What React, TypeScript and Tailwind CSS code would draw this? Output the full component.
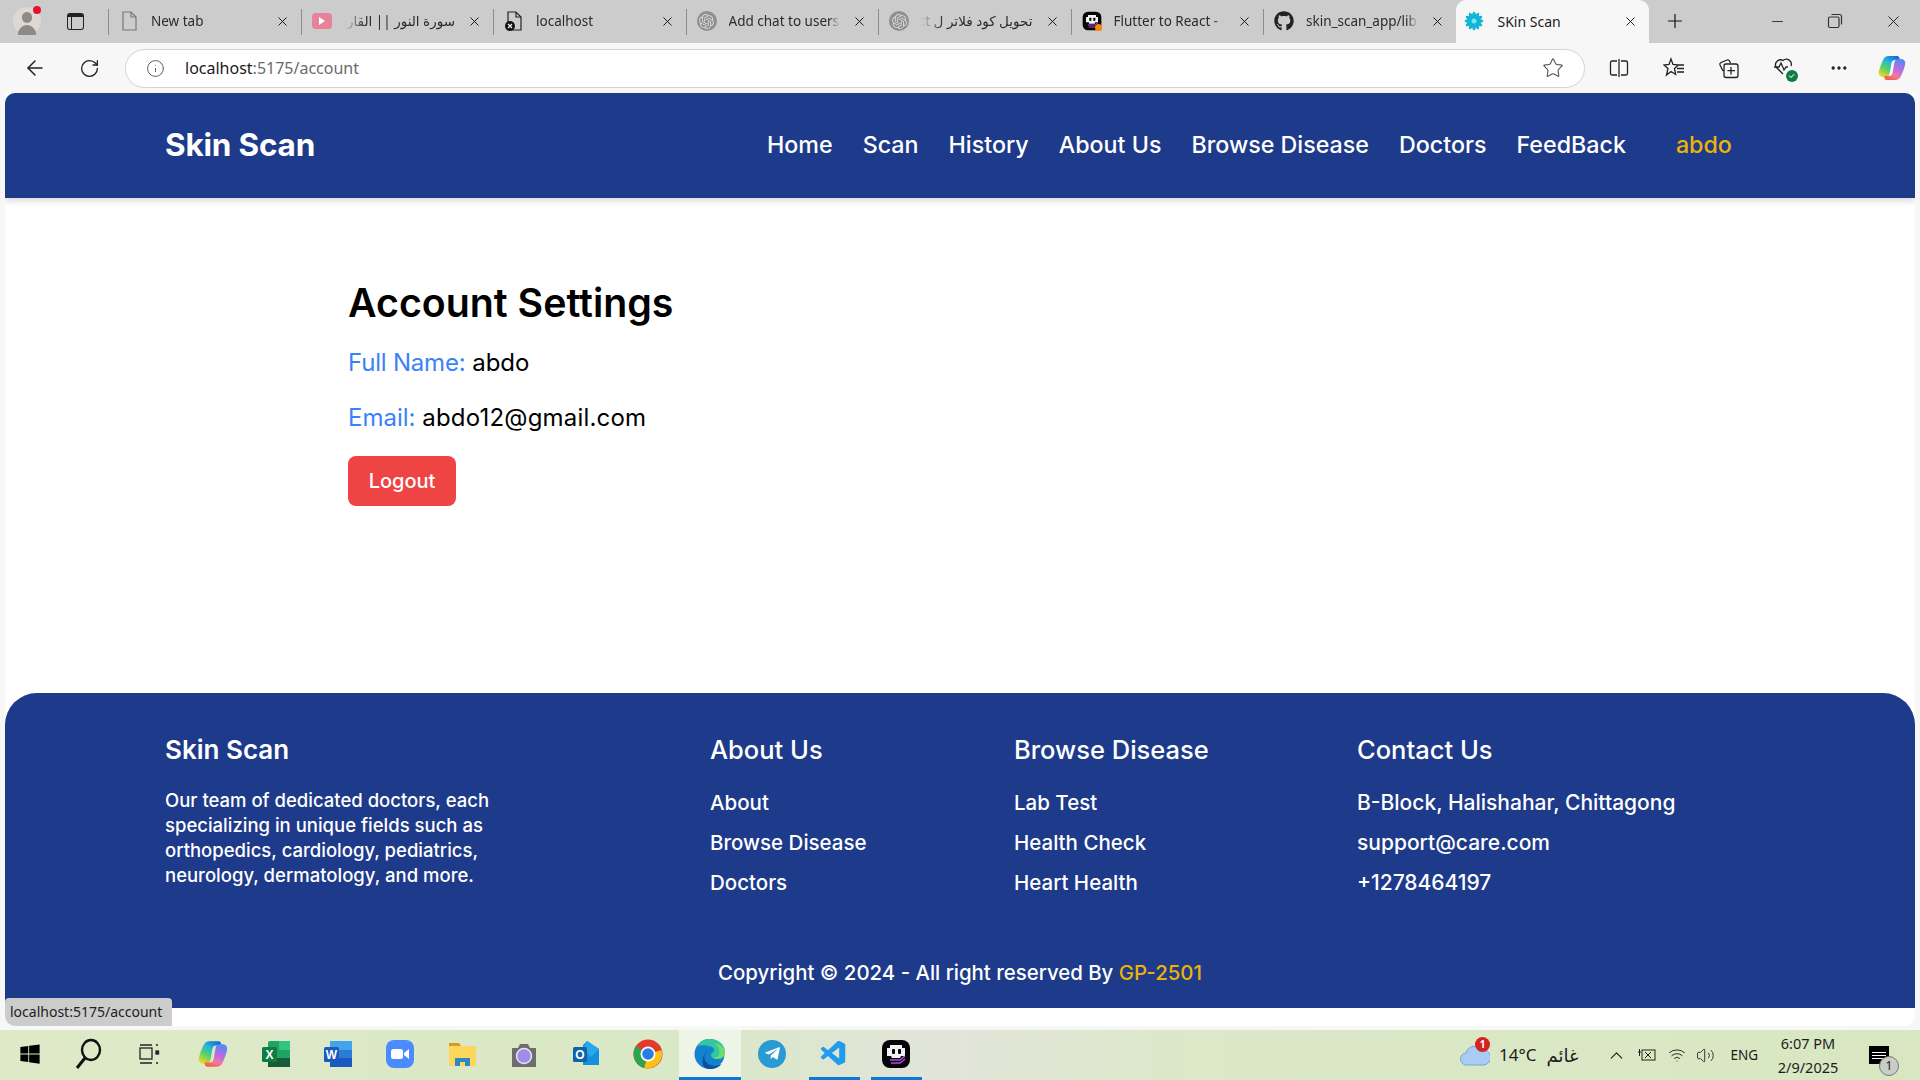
import React from 'react';
import { ArrowLeft, RotateCw, Info, Star, X, Plus, Minus, Ellipsis, ChevronUp, Wifi, Volume2 } from 'lucide-react';
import { FaGithub, FaTelegramPlane, FaWindows } from 'react-icons/fa';
import { VscVscode } from 'react-icons/vsc';
import { SiOpenai } from 'react-icons/si';

const Bot = ({ size = 20, dot = false }: { size?: number; dot?: boolean }) => (
  <svg width={size} height={size} viewBox="0 0 30 30">
    <rect x="1" y="1" width="28" height="28" rx="8" fill="#050507" />
    <path d="M9 6h12v3h3v8h-4l-1 2h-8l-1-2H6V9h3z" fill="#f2f2f2" />
    <rect x="11" y="10" width="3" height="5" rx="1" fill="#050507" />
    <rect x="17" y="10" width="3" height="5" rx="1" fill="#050507" />
    <path d="M9 21h10l5-4M10 24h9l5-4" stroke="#b44ae0" strokeWidth="1.500" fill="none" />
    {dot && <circle cx="25" cy="25" r="5.500" fill="#f48a0c" />}
  </svg>
);

const Flower = () => (
  <svg width="20" height="20" viewBox="0 0 20 20">
    {[0, 30, 60, 90, 120, 150].map((a) => (
      <ellipse key={a} cx="10" cy="10" rx="2.600" ry="9.500" fill="#12b5d6" transform={`rotate(${a} 10 10)`} />
    ))}
    <circle cx="10" cy="10" r="2.500" fill="#7ee3f2" />
  </svg>
);

const DocIcon = ({ broken = false }: { broken?: boolean }) => (
  <svg width="20" height="22" viewBox="0 0 20 22" fill="none" stroke={broken ? '#222' : '#777'} strokeWidth="1.200">
    <path d="M4 2h8l5 5v13H4z" />
    <path d="M12 2v5h5" />
    {broken && <circle cx="6" cy="16" r="5" fill="#111" stroke="none" />}
    {broken && <path d="M4 14l4 4M8 14l-4 4" stroke="#fff" />}
  </svg>
);

const YouTube = () => (
  <div className="w-5 h-4 rounded bg-[#e8829b] flex items-center justify-center">
    <div className="w-0 h-0 border-y-[4px] border-y-transparent border-l-[6px] border-l-white" />
  </div>
);

const Gpt = () => (
  <div className="w-5 h-5 rounded-full bg-[#8f8f8f] flex items-center justify-center text-[#d8d8d8]">
    <SiOpenai size={15} />
  </div>
);

const tabs = [
  { title: 'New tab', icon: <DocIcon /> },
  { title: 'سورة النور || القارئ', icon: <YouTube />, rtl: true },
  { title: 'localhost', icon: <DocIcon broken /> },
  { title: 'Add chat to users', icon: <Gpt /> },
  { title: 'تحويل كود فلاتر ل React', icon: <Gpt />, rtl: true },
  { title: 'Flutter to React -', icon: <Bot dot /> },
  { title: 'skin_scan_app/lib/', icon: <FaGithub size={20} color="#222" /> },
];

const Copilot = ({ size = 24 }: { size?: number }) => (
  <svg width={size} height={size} viewBox="0 0 28 28">
    <defs>
      <linearGradient id="cpA" x1="0.800" y1="0" x2="0.200" y2="1">
        <stop offset="0" stopColor="#1667d9" />
        <stop offset="0.350" stopColor="#25b8d8" />
        <stop offset="0.650" stopColor="#58cf6a" />
        <stop offset="1" stopColor="#f4d81e" />
      </linearGradient>
      <linearGradient id="cpB" x1="0.700" y1="0" x2="0.300" y2="1">
        <stop offset="0" stopColor="#4f8df0" />
        <stop offset="0.400" stopColor="#b46ae6" />
        <stop offset="0.750" stopColor="#f078a8" />
        <stop offset="1" stopColor="#f4623a" />
      </linearGradient>
    </defs>
    <path d="M11 2h8c1 0 2 .6 2.300 1.600L22 6h-5c-2 0-3 1-3.500 3L11.500 20c-.6 2-2 3-4 3H5c-3 0-5-2.500-4-6 1-4 2.500-8 4-11 1-2.500 3-4 6-4z" fill="url(#cpA)" />
    <path d="M17 26H9c-1 0-2-.6-2.300-1.600L6 22h5c2 0 3-1 3.500-3L16.500 8c.6-2 2-3 4-3H23c3 0 5 2.500 4 6-1 4-2.500 8-4 11-1 2.500-3 4-6 4z" fill="url(#cpB)" />
  </svg>
);

const Excel = () => (
  <svg width="30" height="30" viewBox="0 0 30 30">
    <rect x="7" y="2" width="22" height="26" rx="2" fill="#21a366" />
    <rect x="18" y="2" width="11" height="9" fill="#33c481" />
    <rect x="7" y="19" width="22" height="9" fill="#185c37" />
    <rect x="1" y="8" width="15" height="15" rx="1.500" fill="#107c41" />
    <text x="8.500" y="20" fontSize="12" fontWeight="700" fill="#fff" textAnchor="middle" fontFamily="Liberation Sans">X</text>
  </svg>
);

const Word = () => (
  <svg width="30" height="30" viewBox="0 0 30 30">
    <rect x="7" y="2" width="22" height="26" rx="2" fill="#2b7cd3" />
    <rect x="7" y="2" width="22" height="9" fill="#41a5ee" />
    <rect x="7" y="19" width="22" height="9" fill="#185abd" />
    <rect x="1" y="8" width="15" height="15" rx="1.500" fill="#185abd" />
    <text x="8.500" y="20" fontSize="12" fontWeight="700" fill="#fff" textAnchor="middle" fontFamily="Liberation Sans">W</text>
  </svg>
);

const Zoom = () => (
  <svg width="30" height="30" viewBox="0 0 30 30">
    <rect x="1" y="1" width="28" height="28" rx="8" fill="#4a8cff" />
    <rect x="6" y="10" width="12" height="10" rx="2.500" fill="#fff" />
    <path d="M19 14l5-4v10l-5-4z" fill="#fff" />
  </svg>
);

const Files = () => (
  <svg width="30" height="30" viewBox="0 0 30 30">
    <path d="M2 4h10l2 3v3H2z" fill="#d69a1e" />
    <rect x="2" y="7" width="27" height="20" rx="1" fill="#fbd75c" />
    <path d="M8 27v-8h15v8h-5v-4h-5v4z" fill="#2f86c9" />
  </svg>
);

const Camera = () => (
  <svg width="30" height="30" viewBox="0 0 30 30">
    <path d="M3 9h6l2-4h8l2 4h6v19H3z" fill="#6d6d6d" />
    <circle cx="15" cy="17" r="7.500" fill="#a58be8" stroke="#dfe7f5" strokeWidth="1.500" />
  </svg>
);

const Outlook = () => (
  <svg width="30" height="30" viewBox="0 0 30 30">
    <path d="M16 2l12 8v16H12V6z" fill="#1490df" />
    <path d="M16 2l12 8-8 8-8-8z" fill="#28a8ea" />
    <rect x="2" y="8" width="14" height="15" rx="1.500" fill="#0f63a8" />
    <text x="9" y="20" fontSize="12" fontWeight="700" fill="#fff" textAnchor="middle" fontFamily="Liberation Sans">O</text>
  </svg>
);

const Chrome = () => (
  <svg width="30" height="30" viewBox="0 0 30 30">
    <circle cx="15" cy="15" r="14.500" fill="#e33b2e" />
    <path d="M15 15L28.500 11A14.500 14.500 0 0 1 11 29z" fill="#fbc116" />
    <path d="M15 15L11 29A14.500 14.500 0 0 1 3 7z" fill="#2ea44f" />
    <circle cx="15" cy="15" r="7.500" fill="#fff" />
    <circle cx="15" cy="15" r="5.800" fill="#2a7de1" />
  </svg>
);

const Edge = () => (
  <svg width="32" height="32" viewBox="0 0 32 32">
    <circle cx="15.500" cy="16" r="15" fill="#1483cf" />
    <path d="M3 8C6 3 11 1 16 1c9 0 15 6 15 13 0 4-3 7-7 7-3 0-7-1-7-4 0-2 2-2 3-4 .5-1 0-3-2-4C13 7 7 7 3 8z" fill="#33c6a0" />
    <path d="M20 5c6 1 11 5 11 9 0 4-3 7-7 7-2 0-4-.4-5.500-1.500 5 .5 7-2 7-5 0-4-2-7-5.500-9.500z" fill="#6edc6a" />
    <path d="M14 13c-4 2-5 8-1 12 3 3 9 4 15 1-3 3-7 5-12 5-3 0-5-1-6-2-3-5-1-14 4-16z" fill="#0d4f9e" />
  </svg>
);

const CopyIcon = () => (
  <svg width="18" height="18" viewBox="0 0 18 18" fill="none" stroke="#333" strokeWidth="1.200">
    <rect x="2.500" y="5" width="10.500" height="10.500" rx="1.500" />
    <path d="M5.500 2.500h8a2 2 0 0 1 2 2v8" />
  </svg>
);

const TaskView = () => (
  <svg width="24" height="24" viewBox="0 0 24 24" fill="none" stroke="#222" strokeWidth="1.300">
    <rect x="3" y="6" width="12" height="11" />
    <path d="M3 3h12M3 21h12M19 3h2M19 21h2" />
    <rect x="19" y="9" width="2.500" height="3" fill="#222" />
  </svg>
);

const SearchGlass = () => (
  <svg width="30" height="32" viewBox="0 0 30 32" fill="none" stroke="#111" strokeWidth="2.400">
    <ellipse cx="17" cy="12" rx="9" ry="10" />
    <path d="M11 20L3 30" strokeWidth="3" />
  </svg>
);

const taskIcons: { node: React.ReactNode; w: number; active?: boolean; run?: boolean }[] = [
  { node: <FaWindows size={22} color="#000" />, w: 60 },
  { node: <SearchGlass />, w: 58 },
  { node: <TaskView />, w: 62 },
  { node: <Copilot size={30} />, w: 65 },
  { node: <Excel />, w: 62 },
  { node: <Word />, w: 62 },
  { node: <Zoom />, w: 62 },
  { node: <Files />, w: 62 },
  { node: <Camera />, w: 62 },
  { node: <Outlook />, w: 62 },
  { node: <Chrome />, w: 62 },
  { node: <Edge />, w: 62, active: true },
  { node: <div className="w-[28px] h-[28px] rounded-full bg-[#2a9ad4] flex items-center justify-center"><FaTelegramPlane size={17} color="#fff" /></div>, w: 62 },
  { node: <VscVscode size={30} color="#1f9cf0" />, w: 62, run: true },
  { node: <Bot size={30} />, w: 62, run: true },
];

const navLinks = ['Home', 'Scan', 'History', 'About Us', 'Browse Disease', 'Doctors', 'FeedBack'];

const FooterCol = ({ title, items, className, itemSize }: { title: string; items: string[]; className: string; itemSize: string }) => (
  <div className={className}>
    <h3 className="text-[25.500px] leading-[36px] font-medium">{title}</h3>
    <ul className={`mt-[20px] flex flex-col gap-[10px] leading-[30px] font-medium ${itemSize}`}>
      {items.map((i) => <li key={i}>{i}</li>)}
    </ul>
  </div>
);

export default function App() {
  return (
    <div className="w-[1920px] h-[1080px] overflow-hidden flex flex-col bg-[#f7f7f7] font-['Inter',_sans-serif]">
      {/* tab strip */}
      <div className="h-[43px] bg-[#cccccc] flex items-stretch font-['Noto_Sans','DejaVu_Sans',sans-serif] text-[13.500px] text-[#222] pb-[1px]">
        <div className="w-[108px] flex items-center pl-[13px] gap-[26px]">
          <div className="relative w-[28px] h-[28px] rounded-full bg-[#dcd9d5] flex items-end justify-center overflow-visible">
            <div className="absolute top-[5px] left-[9px] w-[10px] h-[11px] rounded-full bg-[#8f8a86]" />
            <div className="w-[18px] h-[10px] rounded-t-full bg-[#8f8a86]" />
            <div className="absolute -top-[1px] right-0 w-2 h-2 rounded-full bg-[#e8112d]" />
          </div>
          <div className="w-[17px] h-[17px] rounded-[3px] border-[1.500px] border-[#222] border-t-[4px] flex">
            <div className="w-[4px] border-r border-[#222]" />
          </div>
        </div>
        {tabs.map((t) => (
          <div key={t.title} className="w-[192.500px] flex items-center pl-[11px] pr-[11px] gap-[12px] relative before:content-[''] before:absolute before:left-0 before:top-[9px] before:bottom-[7px] before:w-px before:bg-[#8c8c8c]">
            <div className="w-[20px] h-5 flex items-center justify-center shrink-0">{t.icon}</div>
            {t.rtl ? (
              <div className="flex-1 overflow-hidden whitespace-nowrap mask-l-from-80% text-[#2b2b2b]" dir="rtl">{t.title}</div>
            ) : (
              <div className="flex-1 overflow-hidden whitespace-nowrap mask-r-from-90% text-[#2b2b2b]">{t.title}</div>
            )}
            <X size={15} strokeWidth={1.500} className="shrink-0 text-[#111]" />
          </div>
        ))}
        <div className="w-[193px] -mb-[1px] bg-[#f7f7f7] rounded-t-[10px] flex items-center pl-[8px] pr-[11px] pb-[1px] gap-[14px]">
          <Flower />
          <div className="flex-1 text-[14px] text-[#222]">SKin Scan</div>
          <X size={15} strokeWidth={1.500} className="text-[#111]" />
        </div>
        <div className="flex items-center pl-[15px]">
          <Plus size={22} strokeWidth={1.300} className="text-[#111]" />
        </div>
        <div className="ml-auto flex items-center pr-[17px] gap-[40px]">
          <Minus size={17} strokeWidth={1.200} className="text-[#222]" />
          <CopyIcon />
          <X size={19} strokeWidth={1.200} className="text-[#222]" />
        </div>
      </div>

      {/* toolbar */}
      <div className="h-[50px] flex items-center pl-[23px]">
        <ArrowLeft size={24} strokeWidth={1.500} className="text-[#222]" />
        <RotateCw size={21} strokeWidth={1.500} className="ml-[32px] text-[#222]" />
        <div className="ml-[25px] w-[1460px] h-[39px] rounded-full bg-white border-[1.500px] border-[#d4d4d4] flex items-center pl-[20px] pr-[20px] font-['Noto_Sans',sans-serif] text-[16px]">
          <Info size={19} strokeWidth={1.200} className="text-[#555]" />
          <span className="ml-[20px] text-[#1b1b1b]">localhost</span>
          <span className="text-[#6b6b6b]">:5175/account</span>
          <Star size={22} strokeWidth={1.200} className="ml-auto text-[#555]" />
        </div>
        <div className="ml-[6px] flex items-center">
          <div className="w-[55px] flex justify-center">
            <svg width="20" height="20" viewBox="0 0 20 20" fill="none" stroke="#222" strokeWidth="1.300"><path d="M8 3H3a1.500 1.500 0 0 0-1.500 1.500v11A1.500 1.500 0 0 0 3 17h5M12 3h5a1.500 1.500 0 0 1 1.500 1.500v11A1.500 1.500 0 0 1 17 17h-5M10 1v18" /></svg>
          </div>
          <div className="w-[55px] flex justify-center">
            <svg width="22" height="22" viewBox="0 0 22 22" fill="none" stroke="#222" strokeWidth="1.300"><path d="M8 2l2 5.500 5.500.5-4 3.500 1.200 6L8 14.500 3.500 18l1.500-6.500-4-3.500 5-.5zM14 8h7M14 11.500h7M14 15h7" /></svg>
          </div>
          <div className="w-[55px] flex justify-center">
            <svg width="22" height="22" viewBox="0 0 22 22" fill="none" stroke="#222" strokeWidth="1.300"><path d="M5 14L2 8a2 2 0 0 1 1-2.500L9 3a2 2 0 0 1 2.500 1l1 2M8 20.500h10a2 2 0 0 0 2-2V9a2 2 0 0 0-2-2H8a2 2 0 0 0-2 2v9.500a2 2 0 0 0 2 2zM13 10v7.500M9.500 13.700h7.500" /></svg>
          </div>
          <div className="w-[55px] flex justify-center">
            <div className="relative w-[22px] h-[22px]">
              <svg width="22" height="20" viewBox="0 0 22 20" fill="none" stroke="#222" strokeWidth="1.300"><path d="M10 17L3 10a5 5 0 0 1 7-6.500A5 5 0 0 1 18 9M1 10h5l2-4 3 7 2-3h2" /></svg>
              <div className="absolute -right-[3px] -bottom-[3px] w-[12px] h-[12px] rounded-full bg-[#107c41] text-white text-[8px] leading-[12px] text-center">✓</div>
            </div>
          </div>
          <div className="w-[55px] flex justify-center">
            <Ellipsis size={20} className="text-[#222]" />
          </div>
          <div className="w-[52px] flex justify-center">
            <Copilot size={28} />
          </div>
        </div>
      </div>

      {/* page */}
      <div className="mx-[5px] w-[1910px] h-[933px] bg-white rounded-b-[10px] flex flex-col relative overflow-hidden text-black">
        <nav className="h-[105px] shrink-0 bg-[#1e3a8a] rounded-t-[10px] shadow-[0_3px_6px_rgba(0,0,0,0.15)] flex items-center text-white pl-[160px] pb-[1px]">
          <div className="w-[602px] text-[31.500px] font-bold tracking-[-0.2px]">Skin Scan</div>
          <div className="flex gap-[30px] text-[23.250px] font-medium">
            {navLinks.map((l) => <span key={l}>{l}</span>)}
            <span className="ml-[20px] text-[#eab308]">abdo</span>
          </div>
        </nav>

        <main className="h-[495px] shrink-0 pl-[343px] pt-[82px]">
          <h1 className="text-[39.300px] leading-[46px] font-semibold">Account Settings</h1>
          <p className="mt-[19px] text-[24px] leading-[36px]"><span className="text-[#3b82f6] tracking-[-0.2px]">Full Name:</span> abdo</p>
          <p className="mt-[19px] text-[24px] leading-[36px]"><span className="text-[#3b82f6]">Email:</span> <span className="tracking-[0.2px]">abdo12@gmail.com</span></p>
          <button className="mt-[20px] w-[108px] h-[50px] rounded-lg bg-[#ef4444] text-white text-[20px] font-medium">Logout</button>
        </main>

        <footer className="h-[315px] shrink-0 bg-[#1e3a8a] rounded-t-[32px] text-white pl-[160px] pt-[39px] flex flex-col">
          <div className="flex">
            <div className="w-[545px]">
              <h3 className="text-[26px] leading-[36px] font-semibold">Skin Scan</h3>
              <p className="mt-[20px] w-[345px] text-[18.500px] leading-[25px] font-medium">Our team of dedicated doctors, each specializing in unique fields such as orthopedics, cardiology, pediatrics, neurology, dermatology, and more.</p>
            </div>
            <FooterCol className="w-[304px]" itemSize="text-[20.500px]" title="About Us" items={['About', 'Browse Disease', 'Doctors']} />
            <FooterCol className="w-[343px]" itemSize="text-[20.500px]" title="Browse Disease" items={['Lab Test', 'Health Check', 'Heart Health']} />
            <FooterCol className="w-[400px]" itemSize="text-[21px]" title="Contact Us" items={['B-Block, Halishahar, Chittagong', 'support@care.com', '+1278464197']} />
          </div>
          <div className="mt-[60px] -ml-[160px] text-center text-[20.400px] leading-[30px] font-medium">Copyright © 2024 - All right reserved By <span className="text-[#eab308]">GP-2501</span></div>
        </footer>

        <div className="absolute left-0 bottom-0 w-[167px] h-[28px] bg-[#cccccc] rounded-t-[4px] rounded-bl-[8px] pl-[5px] pb-[1px] flex items-center font-['Noto_Sans',sans-serif] text-[14px] text-[#222]">localhost:5175/account</div>
      </div>

      {/* taskbar */}
      <div className="mt-auto h-[50px] bg-[linear-gradient(90deg,#dfe9c8,#d9e8c6_36%,#e2e4da_49%,#dce8c8_62%,#d8e7c2)] flex items-stretch font-['Noto_Sans','DejaVu_Sans',sans-serif] text-[#1c1c1c]">
        {taskIcons.map((t, i) => (
          <div key={i} style={{ width: t.w }} className={`flex justify-center ${t.active ? 'bg-[#eef5e6]' : ''}`}>
            <div className={`flex items-center justify-center border-b-[3px] ${t.active ? 'w-full border-[#0f78d4]' : t.run ? 'w-[51px] border-[#0f78d4]' : 'w-full border-transparent'}`}>
              {t.node}
            </div>
          </div>
        ))}
        <div className="ml-auto flex items-center pr-[31px]">
          <div className="relative w-[30px] h-[22px] mr-[9px]">
            <svg width="30" height="22" viewBox="0 0 30 22"><path d="M7 21a6 6 0 0 1-1-12 9 9 0 0 1 16-3 7.500 7.500 0 0 1 2 15z" fill="#a9cdf2" stroke="#6fa6e0" /></svg>
            <div className="absolute -top-[7px] right-0 w-[15px] h-[15px] rounded-full bg-[#d32323] text-white text-[10px] leading-[15px] text-center font-bold">1</div>
          </div>
          <span className="text-[17px]">14°C</span>
          <span className="ml-[10px] text-[18px]">غائم</span>
          <ChevronUp size={21} strokeWidth={1.300} className="ml-[28px]" />
          <svg className="ml-[10px]" width="20" height="16" viewBox="0 0 20 16" fill="none" stroke="#222" strokeWidth="1"><rect x="5" y="3" width="13" height="10" /><path d="M8 5l6 6M14 5l-6 6M1 5h3M2.500 2v7" /></svg>
          <Wifi size={18} strokeWidth={1.200} className="ml-[11px]" />
          <Volume2 size={19} strokeWidth={1.100} className="ml-[10px]" />
          <span className="ml-[15px] text-[13.500px]">ENG</span>
          <div className="ml-[15px] w-[70px] text-center text-[14.500px] leading-[24px] whitespace-nowrap">
            <div>6:07 PM</div>
            <div>2/9/2025</div>
          </div>
          <div className="relative ml-[26px] w-[20px] h-[18px] bg-black flex flex-col justify-center gap-[2px] px-[3px]">
            <div className="h-px bg-white" /><div className="h-px bg-white" /><div className="h-px bg-white" />
            <div className="absolute -right-[10px] -bottom-[12px] w-[20px] h-[20px] rounded-full bg-[#c9cdc5] border border-[#777] text-[12px] leading-[18px] text-center">1</div>
          </div>
        </div>
      </div>
    </div>
  );
}
